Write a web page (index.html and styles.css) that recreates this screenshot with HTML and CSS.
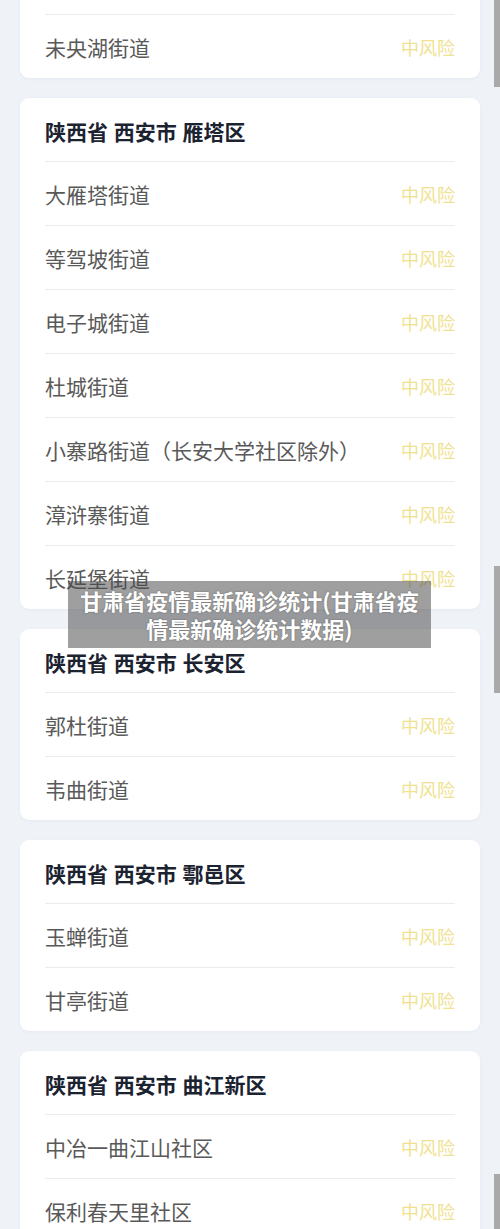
FILE: index.html
```html
<!DOCTYPE html>
<html lang="zh-CN">
<head>
<meta charset="UTF-8">
<meta name="viewport" content="width=device-width, initial-scale=1.0">
<title>甘肃省疫情最新确诊统计</title>
<link rel="stylesheet" href="styles.css">
</head>
<body>

<div class="page">

  <div class="area first">
    <div class="area-title">陕西省 西安市 未央区</div>
    <div class="street"><span>张家堡街道</span><span class="risk">中风险</span></div>
    <div class="street"><span>徐家湾街道</span><span class="risk">中风险</span></div>
    <div class="street"><span>未央湖街道</span><span class="risk">中风险</span></div>
  </div>

  <div class="area">
    <div class="area-title">陕西省 西安市 雁塔区</div>
    <div class="street"><span>大雁塔街道</span><span class="risk">中风险</span></div>
    <div class="street"><span>等驾坡街道</span><span class="risk">中风险</span></div>
    <div class="street"><span>电子城街道</span><span class="risk">中风险</span></div>
    <div class="street"><span>杜城街道</span><span class="risk">中风险</span></div>
    <div class="street"><span>小寨路街道（长安大学社区除外）</span><span class="risk">中风险</span></div>
    <div class="street"><span>漳浒寨街道</span><span class="risk">中风险</span></div>
    <div class="street"><span>长延堡街道</span><span class="risk">中风险</span></div>
  </div>

  <div class="area">
    <div class="area-title">陕西省 西安市 长安区</div>
    <div class="street"><span>郭杜街道</span><span class="risk">中风险</span></div>
    <div class="street"><span>韦曲街道</span><span class="risk">中风险</span></div>
  </div>

  <div class="area">
    <div class="area-title">陕西省 西安市 鄠邑区</div>
    <div class="street"><span>玉蝉街道</span><span class="risk">中风险</span></div>
    <div class="street"><span>甘亭街道</span><span class="risk">中风险</span></div>
  </div>

  <div class="area">
    <div class="area-title">陕西省 西安市 曲江新区</div>
    <div class="street"><span>中冶一曲江山社区</span><span class="risk">中风险</span></div>
    <div class="street"><span>保利春天里社区</span><span class="risk">中风险</span></div>
    <div class="street"><span>曲江池街道</span><span class="risk">中风险</span></div>
  </div>

</div>

<!-- scrollbar thumbs left over from the long capture -->
<div class="thumb thumb-a"></div>
<div class="thumb thumb-b"></div>
<div class="thumb thumb-c"></div>

<!-- article title banner -->
<div class="banner">甘肃省疫情最新确诊统计(甘肃省疫情最新确诊统计数据)</div>

</body>
</html>
```

FILE: styles.css
```css
* {
    box-sizing: border-box;
}
html, body {
    height: 1229px;
    overflow: hidden;
}
body {
    margin: 0;
    position: relative;
    background-color: #eff3f8;
    font-family: 'Noto Sans CJK SC', 'Noto Sans', sans-serif;
}
.page {
    display: flex;
    flex-direction: column;
    gap: 20px;
    padding: 0 20px;
}
/* list is scrolled: only the tail of the first card shows */
.area.first {
    margin-top: -177px;
}
.area {
    background: #fff;
    border-radius: 9px;
    padding: 0 25px;
    box-shadow: 0 1px 3px rgba(160,175,200,0.12);
}
.area-title {
    height: 63px;
    display: flex;
    align-items: center;
    font-size: 21px;
    font-weight: 700;
    color: #1b2230;
    padding-top: 2px;
    word-spacing: 1px;
}
.street {
    height: 64px;
    border-top: 1px solid #e9ebee;
    display: flex;
    align-items: center;
    justify-content: space-between;
    font-size: 21px;
    color: #595959;
}
.risk {
    font-size: 18px;
    color: #f0e290;
}
.thumb {
    position: absolute;
    right: 0;
    width: 6px;
    background: #a9a9a9;
}
.thumb-a {
    top: 0;
    height: 87px;
}
.thumb-b {
    top: 566px;
    height: 127px;
}
.thumb-c {
    top: 1174px;
    height: 55px;
}
.banner {
    position: absolute;
    left: 68px;
    top: 581px;
    width: 363px;
    padding: 5px 10px 6px;
    background: rgba(70,70,70,0.52);
    color: #fff;
    font-size: 22px;
    font-weight: 700;
    line-height: 28px;
    text-align: center;
    text-shadow: 0 0 2px rgba(0,0,0,0.35);
}
```
